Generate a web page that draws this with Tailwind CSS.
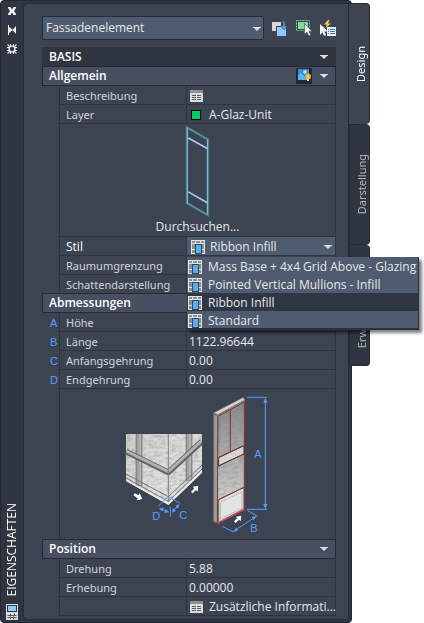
<!DOCTYPE html>
<html lang="de">
<head>
  <meta charset="UTF-8">
  <meta name="viewport" content="width=device-width, initial-scale=1.0">
  <title>Eigenschaften</title>
  <script src="https://cdn.jsdelivr.net/npm/@tailwindcss/browser@4"></script>
</head>
<body class="bg-white font-['Open_Sans','Noto_Sans',sans-serif] text-xs leading-4 text-[#e6e8eb]">

  <!-- shared symbols -->
  <svg class="hidden">
    <symbol id="arrow" viewBox="0 0 8 4"><path d="M0 0h8v1H7L4 4 1 1H0z" fill="#dcdcdc"/></symbol>
    <symbol id="style" viewBox="0 0 14 14">
      <path d="M0 0h14v14H0z" fill="#e4e4e4"/>
      <path d="M1 1h3v2H1zM5 1h4v2H5zM10 1h3v2h-3zM1 4h3v5H1zM10 4h3v5h-3zM1 10h3v3H1zM10 10h3v3h-3zM5 4h4v1H5z" fill="#8c8c8c"/>
      <path d="M4 4h7v10H4z" fill="#2c4a66"/>
      <path d="M5 5h5v8H5z" fill="#5dade8"/>
    </symbol>
    <symbol id="sheet" viewBox="0 0 13 12">
      <path d="M0 0h13v12H0z" fill="#dcdcdc"/>
      <path d="M0 0h13v3H0z" fill="#909090"/>
      <path d="M2 5h4v1H2zM7 5h4v1H7zM2 7h4v1H2zM7 7h4v1H7zM2 9h4v1H2zM7 9h4v1H7z" fill="#5c5c5c"/>
    </symbol>
  </svg>

  <div class="flex items-start pr-[54px]">

    <!-- palette window -->
    <div class="flex min-w-0 flex-1 rounded-sm border border-[#222831] bg-[#2f3541] pr-[2px] pb-[2px]">

      <!-- title bar -->
      <div class="flex w-[22px] shrink-0 flex-col items-center gap-[7px] pt-1">
        <button aria-label="Schließen" class="size-3">
          <svg viewBox="0 0 12 12" class="size-3"><path d="M2 2h2.500L6 4.500 7.500 2H10v1L8 6l2 3v1H7.500L6 7.500 4.500 10H2V9l2-3-2-3z" fill="#f0f0f0"/></svg>
        </button>
        <button aria-label="Automatisch ausblenden" class="size-3">
          <svg viewBox="0 0 12 12" class="size-3"><path d="M2 1h1v10H2zM3 3l4 3-4 3zM10 2v8L6.500 6z" fill="#f0f0f0"/></svg>
        </button>
        <button aria-label="Optionen" class="size-3">
          <svg viewBox="0 0 12 12" class="size-3" fill="none" stroke="#f0f0f0"><circle cx="6" cy="6" r="2.900" stroke-width="1.400"/><path d="M4.500 1v2M7.500 1v2M4.500 9v2M7.500 9v2M1 4.500h2M1 7.500h2M9 4.500h2M9 7.500h2M1.500 1.500l2 2M8.500 8.500l2 2M1.500 10.500l2-2M8.500 3.500l2-2" stroke-width="1.100"/></svg>
        </button>
        <span class="mt-auto rotate-180 text-white [writing-mode:vertical-rl]">EIGENSCHAFTEN</span>
        <svg viewBox="0 0 12 16" class="h-4 w-3 shrink-0">
          <path d="M0 0h12v16H0z" fill="#dcdcdc"/><path d="M1 1h10v7H1z" fill="#2f3541"/><path d="M2 2h8v5H2z" fill="#8ccaff"/>
          <path d="M1.500 11.500h9M1.500 13.500h9M4.500 10v2.500M8.500 9.500v2M4.500 13v2M7.500 12.500v3" stroke="#555" fill="none"/>
        </svg>
      </div>

      <!-- content -->
      <main class="mt-[2px] min-w-0 flex-1 rounded-tl rounded-bl border border-[#252b35] bg-[#3c4452] pt-3 pr-[12px] pb-[3px] pl-[18px]">

        <div class="flex items-center">
          <div class="relative min-w-0 flex-1">
            <select aria-label="Objekttyp" class="h-6 w-full appearance-none rounded-[1px] border border-[#262c37] bg-[#4f5b6e] pl-[3px] text-[#e6e8eb]">
              <option>Fassadenelement</option>
            </select>
            <svg class="pointer-events-none absolute top-[11px] right-[3px] h-1 w-2"><use href="#arrow"/></svg>
          </div>
          <div class="flex gap-2 pl-2">
            <button aria-label="Umschalten">
              <svg viewBox="0 0 16 16" class="size-4"><path d="M0 2h9v9H0z" fill="#d8d8d8"/><path d="M4 6h11v10H4z" fill="#3c4452"/><path d="M5 7h9v9H5z" fill="#8ccaff"/><path d="M10 0q4 1 3 6h2.500L12 10 8.500 6H11q1-3-1-6z" fill="#4aa3e6" stroke="#3c4452" stroke-width=".5"/></svg>
            </button>
            <button aria-label="Objekte wählen">
              <svg viewBox="0 0 16 16" class="size-4"><path d="M.5.5h13v10H.5z" fill="none" stroke="#5fe08e" stroke-dasharray="2 1"/><path d="M2 2h10v7H2z" fill="#86d8a0"/><path d="M8.500 3.500v11l2.500-2.300 1.800 3.800 2-1-1.800-3.500h3z" fill="#f4f4f4" stroke="#3c4452" stroke-width=".6"/></svg>
            </button>
            <button aria-label="Schnellauswahl">
              <svg viewBox="0 0 16 16" class="size-4"><path d="M0 4v11l2.500-2.500L4 16l2-1-1.500-3.500H8z" fill="#f4f4f4"/><path d="M8 0L4 4.500h3L5.500 8 11 3.500H8L9.500 0z" fill="#ffc860"/><path d="M7 7h9v9H7z" fill="#f0f0f0"/><path d="M8 9h1v1H8zM8 11h1v1H8zM8 13h1v1H8zM10 9h5v1h-5zM10 11h5v1h-5zM10 13h5v1h-5z" fill="#2d7fc4"/></svg>
            </button>
          </div>
        </div>

        <table class="mt-[7px] w-full table-fixed border-separate border-spacing-0">
          <colgroup><col class="w-[17px]"><col class="w-[127px]"><col></colgroup>

          <tbody>
            <tr>
              <th colspan="3" class="h-5 border-b border-[#252b35] bg-[#2f3541] p-0 pl-[7px] text-left font-semibold text-white">
                <div class="flex items-center justify-between pr-2">BASIS<svg class="h-1 w-2"><use href="#arrow"/></svg></div>
              </th>
            </tr>
            <tr>
              <th colspan="3" class="h-[19px] border border-t-0 border-[#252b35] bg-[#474f61] p-0 pl-[6px] text-left font-semibold text-white">
                <div class="flex h-[18px] items-center pr-[7px]">Allgemein
                  <button aria-label="Materialvorschau" class="mr-2 ml-auto h-4 w-4">
                    <svg viewBox="0 0 16 16" class="size-4"><path d="M0 0h16v16H0z" fill="#222934"/><path d="M2 1h11v11H2z" fill="#3492d6"/><path d="M2 7l3-2 4 4 4-3v6H2z" fill="#5ab4f0"/><path d="M9 2v4M7 4h4" stroke="#fff"/><circle cx="12" cy="8.500" r="3" fill="#f5a832"/><path d="M12 6l1 2-1 3-1-3z" fill="#ffe06a"/><path d="M11 11h2v2h-2z" fill="#ddd"/></svg>
                  </button>
                  <svg class="h-1 w-2"><use href="#arrow"/></svg>
                </div>
              </th>
            </tr>
            <tr>
              <td></td>
              <td class="h-[19px] border-b border-l border-[#2e3542] p-0 pt-[2px] pl-[6px] font-['Noto_Sans',sans-serif] text-[11px] text-[#d2d4d8]">Beschreibung</td>
              <td class="border-x border-b border-[#2e3542] p-0 pt-[2px] pl-[3px]"><button aria-label="Beschreibung bearbeiten" class="block"><svg class="h-3 w-[13px]"><use href="#sheet"/></svg></button></td>
            </tr>
            <tr>
              <td></td>
              <td class="h-[19px] border-b border-l border-[#2e3542] p-0 pt-[2px] pl-[6px] font-['Noto_Sans',sans-serif] text-[11px] text-[#d2d4d8]">Layer</td>
              <td class="border-x border-b border-[#2e3542] p-0 pt-[2px] pl-1"><div class="flex items-center gap-2"><span class="size-[10px] border border-black bg-[#00cc66]"></span>A-Glaz-Unit</div></td>
            </tr>
            <tr>
              <td></td>
              <td colspan="2" class="h-[113px] border-x border-b border-[#2e3542] p-0 text-center align-top">
                <svg viewBox="14 44 76 280" class="mx-auto mt-px mb-px h-[93px] w-[25px]" fill="none">
                  <path d="M20 50l64 37v230l-64-37z" stroke="#3f8489" stroke-width="7"/>
                  <path d="M21 52v228M82 88v226" stroke="#86c5dc" stroke-width="3"/>
                  <path d="M20 50l64 37M20 280l64 37" stroke="#6aa3ad" stroke-width="3" stroke-dasharray="5 3"/>
                  <path d="M24 82l58 32M24 246l58 33" stroke="#a9c8f3" stroke-width="5"/>
                </svg>
                <button>Durchsuchen...</button>
              </td>
            </tr>
            <tr>
              <td></td>
              <td class="h-[19px] border-b border-l border-[#2e3542] p-0 pt-[2px] pl-[6px] text-white"><label for="stil">Stil</label></td>
              <td class="relative border-x border-b border-[#2e3542] bg-[#4f5b6e] p-0 pt-[2px]">
                <div class="flex items-center gap-[5px] pl-1">
                  <svg class="size-[14px] shrink-0"><use href="#style"/></svg>
                  <select id="stil" class="h-4 min-w-0 flex-1 appearance-none">
                    <option>Ribbon Infill</option>
                  </select>
                </div>
                <svg class="pointer-events-none absolute top-[8px] right-[3px] h-1 w-2"><use href="#arrow"/></svg>
                <!-- open list -->
                <ul role="listbox" aria-label="Stil" class="absolute top-[20px] left-0 z-20 w-[232px] border-r border-b-2 border-[#2a3140] bg-[#4f5b6e] shadow-[3px_3px_3px_rgba(0,0,0,0.5)]">
                  <li role="option" class="flex h-[18px] items-center gap-[6px] pt-[2px] pl-px whitespace-nowrap"><svg class="size-[14px] shrink-0"><use href="#style"/></svg>Mass Base + 4x4 Grid Above - Glazing</li>
                  <li role="option" class="flex h-[18px] items-center gap-[6px] pt-[2px] pl-px whitespace-nowrap"><svg class="size-[14px] shrink-0"><use href="#style"/></svg>Pointed Vertical Mullions - Infill</li>
                  <li role="option" aria-selected="true" class="flex h-[18px] items-center gap-[6px] bg-[#2f3644] pt-[2px] pl-px whitespace-nowrap"><svg class="size-[14px] shrink-0"><use href="#style"/></svg>Ribbon Infill</li>
                  <li role="option" class="flex h-[17px] items-center gap-[6px] pt-[2px] pl-px whitespace-nowrap"><svg class="size-[14px] shrink-0"><use href="#style"/></svg>Standard</li>
                </ul>
              </td>
            </tr>
            <tr>
              <td></td>
              <td class="h-[19px] border-b border-l border-[#2e3542] p-0 pt-[2px] pl-[6px] font-['Noto_Sans',sans-serif] text-[11px] text-[#d2d4d8]">Raumumgrenzung</td>
              <td class="border-x border-b border-[#2e3542]"></td>
            </tr>
            <tr>
              <td></td>
              <td class="h-[19px] border-b border-l border-[#2e3542] p-0 pt-[2px] pl-[6px] font-['Noto_Sans',sans-serif] text-[11px] text-[#d2d4d8]">Schattendarstellung</td>
              <td class="border-x border-b border-[#2e3542]"></td>
            </tr>
          </tbody>

          <tbody>
            <tr>
              <th colspan="3" class="h-[19px] border border-t-0 border-[#252b35] bg-[#474f61] p-0 pl-[6px] text-left font-semibold text-white shadow-[0_-1px_0_#252b35]">Abmessungen</th>
            </tr>
            <tr>
              <td class="p-0 pl-2 font-['Liberation_Sans',sans-serif] text-[11px] text-[#5b9bff]">A</td>
              <td class="h-[19px] border-b border-l border-[#2e3542] p-0 pt-[2px] pl-[6px] font-['Noto_Sans',sans-serif] text-[11px] text-[#d2d4d8]">Höhe</td>
              <td class="border-x border-b border-[#2e3542]"></td>
            </tr>
            <tr>
              <td class="p-0 pl-2 font-['Liberation_Sans',sans-serif] text-[11px] text-[#5b9bff]">B</td>
              <td class="h-[19px] border-b border-l border-[#2e3542] p-0 pt-[2px] pl-[6px] font-['Noto_Sans',sans-serif] text-[11px] text-[#d2d4d8]"><label for="laenge">Länge</label></td>
              <td class="border-x border-b border-[#2e3542] p-0 pt-[2px] pl-[2px]"><input id="laenge" value="1122.96644" class="block h-4 w-full"></td>
            </tr>
            <tr>
              <td class="p-0 pl-2 font-['Liberation_Sans',sans-serif] text-[11px] text-[#5b9bff]">C</td>
              <td class="h-[19px] border-b border-l border-[#2e3542] p-0 pt-[2px] pl-[6px] font-['Noto_Sans',sans-serif] text-[11px] text-[#d2d4d8]"><label for="anfang">Anfangsgehrung</label></td>
              <td class="border-x border-b border-[#2e3542] p-0 pt-[2px] pl-[2px]"><input id="anfang" value="0.00" class="block h-4 w-full"></td>
            </tr>
            <tr>
              <td class="p-0 pl-2 font-['Liberation_Sans',sans-serif] text-[11px] text-[#5b9bff]">D</td>
              <td class="h-[19px] border-b border-l border-[#2e3542] p-0 pt-[2px] pl-[6px] font-['Noto_Sans',sans-serif] text-[11px] text-[#d2d4d8]"><label for="ende">Endgehrung</label></td>
              <td class="border-x border-b border-[#2e3542] p-0 pt-[2px] pl-[2px]"><input id="ende" value="0.00" class="block h-4 w-full"></td>
            </tr>
            <tr>
              <td></td>
              <td colspan="2" class="h-[151px] border-x border-b border-[#2e3542] p-0">
                <!-- dimension sketch -->
                <svg viewBox="30 12 465 450" class="mx-auto h-[150px] w-[155px]">
                  <defs>
                    <filter id="grain" x="0" y="0" width="1" height="1">
                      <feTurbulence type="fractalNoise" baseFrequency=".06 .12" numOctaves="3" seed="4"/>
                      <feColorMatrix values="0 0 0 0 .2  0 0 0 0 .2  0 0 0 0 .2  .8 0 0 0 -.3"/>
                      <feComposite in2="SourceGraphic" operator="in"/>
                    </filter>
                    <linearGradient id="wall" x1="0" y1="0" x2="1" y2="1"><stop offset="0" stop-color="#cfd1ce"/><stop offset="1" stop-color="#efefec"/></linearGradient>
                    <linearGradient id="glass" x1="0" y1="0" x2="0" y2="1"><stop offset="0" stop-color="#868a87"/><stop offset=".6" stop-color="#b8bbb7"/><stop offset="1" stop-color="#e4e6e1"/></linearGradient>
                    <clipPath id="corner"><path d="M48 147h228v117l-101 97L48 289z"/></clipPath>
                  </defs>
                  <g clip-path="url(#corner)" fill="none">
                    <path d="M48 147h228v117l-101 97L48 289z" fill="url(#wall)"/>
                    <path d="M175 147h101v117l-101 97z" fill="#dcdedb"/>
                    <path d="M48 147h228v117l-101 97L48 289z" fill="#777" filter="url(#grain)"/>
                    <path d="M87 147v156M237 147v140" stroke="#707370" stroke-width="20"/>
                    <path d="M87 147v156M237 147v140" stroke="#b0b3b0" stroke-width="14"/>
                    <path d="M84 147v156M234 147v140" stroke="#7d807d" stroke-width="2"/>
                    <path d="M48 200l127 62 101-93" stroke="#5c5f5d" stroke-width="17"/>
                    <path d="M48 198l127 62 101-93" stroke="#b0b3b0" stroke-width="9"/>
                    <path d="M48 204l127 62 101-93" stroke="#797c79" stroke-width="2"/>
                    <path d="M175 147v205" stroke="#7b7e7b" stroke-width="3"/>
                    <path d="M48 267l127 68 101-95M48 279l127 70 101-97" stroke="#747774" stroke-width="3"/>
                    <path d="M48 286l127 70 101-97" stroke="#eee" stroke-width="4"/>
                  </g>
                  <path d="M310 85l90-47 4 6v330l-82 41-12-4z" fill="#8d908d"/>
                  <path d="M312 88l11 5v320l-12-4z" fill="#9da09c" stroke="#5c5f5c" stroke-width="2"/>
                  <path d="M310 84l90-47 4 8-80 44z" fill="#d4d6d1" stroke="#5c5f5c" stroke-width="2"/>
                  <path d="M324 94l78-43v320l-78 43z" fill="url(#glass)"/>
                  <path d="M324 94l78-43v320l-78 43z" fill="#555" filter="url(#grain)"/>
                  <path d="M326 218l76-36v25l-76 36z" fill="#d5d7d3" stroke="#3e413f" stroke-width="3"/>
                  <path d="M326 344l76-37v65l-76 40z" fill="#e2e4df" stroke="#5c5f5c" stroke-width="3"/>
                  <path d="M331 352l65-32v50l-65 33z" fill="none" stroke="#b5b8b4" stroke-width="3"/>
                  <path d="M324 94l79-43v322l-81 42zM361 75v123M326 217l76-36M326 242l76-35M326 344l76-37" fill="none" stroke="#8c2c33" stroke-width="3"/>
                  <path d="M322 415l81-42" stroke="#d84850" stroke-width="4"/>
                  <!-- arrows -->
                  <g fill="#fff">
                    <path d="M243 320l10-10-5-5 17-3-2 18-5-5-10 10z"/>
                    <path d="M70 331l5-6 10 6 4-6 8 17-17 4 3-6z"/>
                    <path d="M372 409l10-10-5-4 17-3-2 17-5-5-10 10z"/>
                  </g>
                  <g fill="none" stroke="#5b9bff" stroke-width="3">
                    <path d="M411 37h60M411 373h60M466 42v326M145 364l24-25M181 337l28 18M181 366v29M150 371l25 9M188 380l17-19M337 424l34 17M413 377l30 17M372 438l64-42"/>
                    <path d="M162 346l7-7h12l9 6" stroke-dasharray="5 4"/>
                  </g>
                  <path d="M466 38l-6 15h12zM466 372l-6-15h12zM147 369l14-1-4 12zM177 382l-14 2 4-12zM186 383l3-14 9 8zM208 357l-3 14-9-8zM369 440l9-12 6 9zM440 393l-9 12-6-9z" fill="#5b9bff"/>
                  <g fill="#5b9bff" class="font-['Liberation_Sans',sans-serif] text-[33px]">
                    <text x="433" y="219">A</text><text x="421" y="442">B</text><text x="208" y="402">C</text><text x="127" y="405">D</text>
                  </g>
                </svg>
              </td>
            </tr>
          </tbody>

          <tbody>
            <tr>
              <th colspan="3" class="h-[19px] border border-t-0 border-[#252b35] bg-[#474f61] p-0 pl-[6px] text-left font-semibold text-white shadow-[0_-1px_0_#252b35]">
                <div class="flex items-center justify-between pr-[7px]">Position<svg class="h-1 w-2"><use href="#arrow"/></svg></div>
              </th>
            </tr>
            <tr>
              <td></td>
              <td class="h-[19px] border-b border-l border-[#2e3542] p-0 pt-[2px] pl-[6px] font-['Noto_Sans',sans-serif] text-[11px] text-[#d2d4d8]"><label for="drehung">Drehung</label></td>
              <td class="border-x border-b border-[#2e3542] p-0 pt-[2px] pl-[2px]"><input id="drehung" value="5.88" class="block h-4 w-full"></td>
            </tr>
            <tr>
              <td></td>
              <td class="h-[19px] border-b border-l border-[#2e3542] p-0 pt-[2px] pl-[6px] font-['Noto_Sans',sans-serif] text-[11px] text-[#d2d4d8]"><label for="erhebung">Erhebung</label></td>
              <td class="border-x border-b border-[#2e3542] p-0 pt-[2px] pl-[2px]"><input id="erhebung" value="0.00000" class="block h-4 w-full"></td>
            </tr>
            <tr>
              <td></td>
              <td class="h-[19px] border-b border-l border-[#2e3542]"></td>
              <td class="border-x border-b border-[#2e3542] p-0 pt-[2px] pl-[3px]">
                <button class="flex items-center gap-[6px] whitespace-pre"><svg class="h-3 w-[13px] shrink-0"><use href="#sheet"/></svg>Zusätzliche Informati...</button>
              </td>
            </tr>
          </tbody>
        </table>
      </main>
    </div>

    <!-- side tabs -->
    <div role="tablist" class="z-10 mt-[3px] -ml-[3px] flex w-[21px] shrink-0 flex-col font-['Noto_Sans',sans-serif] text-[11px]">
      <button role="tab" aria-selected="true" class="flex h-[121px] items-center justify-center rounded-r border-y border-r border-[#252b35] border-b-transparent bg-[#3c4452] pl-1 text-white"><span class="rotate-180 [writing-mode:vertical-rl]">Design</span></button>
      <button role="tab" class="flex h-[121px] items-center justify-center rounded-r border border-[#252b35] bg-[#2f3541] pl-1 text-[#b4b7bc]"><span class="rotate-180 [writing-mode:vertical-rl]">Darstellung</span></button>
      <button role="tab" class="flex h-[121px] items-center justify-center rounded-r border border-t-0 border-[#252b35] bg-[#2f3541] pl-1 text-[#b4b7bc]"><span class="rotate-180 [writing-mode:vertical-rl]">Erweiterte Daten</span></button>
    </div>
  </div>

</body>
</html>
